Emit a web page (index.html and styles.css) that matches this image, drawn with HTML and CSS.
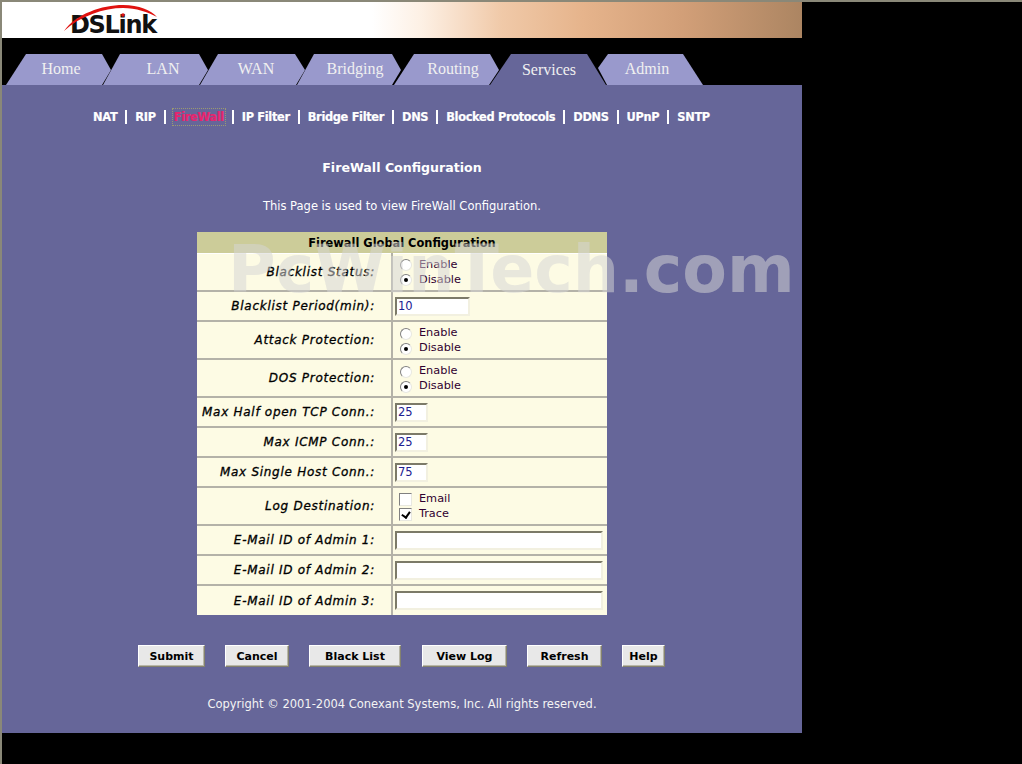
FILE: index.html
```html
<!DOCTYPE html>
<html lang="en">
<head>
<meta charset="utf-8">
<title>FireWall Configuration</title>
<link rel="stylesheet" href="styles.css">
</head>
<body>
<div class="page">
  <header class="banner">
    <div class="logo">
      <span class="logo-text">DSLink</span>
      <svg class="logo-arc" width="100" height="30" viewBox="0 0 100 30" aria-hidden="true"><path d="M0 27 C12 10 38 1 59 1 C75 1 87 6 93 13 C84 8 72 4 59 4 C40 4 16 12 0 27 Z" fill="#e0120f"/><circle cx="59" cy="11" r="1.8" fill="#e0120f"/></svg>
    </div>
  </header>
  <nav class="tabs">
    <a class="tab tab-home">Home</a>
    <a class="tab tab-lan">LAN</a>
    <a class="tab tab-wan">WAN</a>
    <a class="tab tab-bridging">Bridging</a>
    <a class="tab tab-routing">Routing</a>
    <a class="tab tab-services">Services</a>
    <a class="tab tab-admin">Admin</a>
  </nav>
  <main class="content">
    <ul class="subnav">
      <li>NAT</li><li class="bar"></li>
      <li>RIP</li><li class="bar"></li>
      <li class="current">FireWall</li><li class="bar"></li>
      <li>IP Filter</li><li class="bar"></li>
      <li>Bridge Filter</li><li class="bar"></li>
      <li>DNS</li><li class="bar"></li>
      <li>Blocked Protocols</li><li class="bar"></li>
      <li>DDNS</li><li class="bar"></li>
      <li>UPnP</li><li class="bar"></li>
      <li>SNTP</li>
    </ul>
    <h1 class="title">FireWall Configuration</h1>
    <p class="intro">This Page is used to view FireWall Configuration.</p>
    <table class="config">
      <colgroup><col class="col-name"><col class="col-val"></colgroup>
      <thead>
        <tr><th colspan="2">Firewall Global Configuration</th></tr>
      </thead>
      <tbody>
        <tr class="tall"><td class="name">Blacklist Status:</td><td class="val">
          <label class="opt"><input type="radio" name="bl">Enable</label>
          <label class="opt"><input type="radio" name="bl" checked>Disable</label></td></tr>
        <tr><td class="name">Blacklist Period(min):</td><td class="val"><input class="field mid" type="text" value="10"></td></tr>
        <tr class="tall"><td class="name">Attack Protection:</td><td class="val">
          <label class="opt"><input type="radio" name="ap">Enable</label>
          <label class="opt"><input type="radio" name="ap" checked>Disable</label></td></tr>
        <tr class="tall"><td class="name">DOS Protection:</td><td class="val">
          <label class="opt"><input type="radio" name="dp">Enable</label>
          <label class="opt"><input type="radio" name="dp" checked>Disable</label></td></tr>
        <tr><td class="name">Max Half open TCP Conn.:</td><td class="val"><input class="field short" type="text" value="25"></td></tr>
        <tr><td class="name">Max ICMP Conn.:</td><td class="val"><input class="field short" type="text" value="25"></td></tr>
        <tr><td class="name">Max Single Host Conn.:</td><td class="val"><input class="field short" type="text" value="75"></td></tr>
        <tr class="tall"><td class="name">Log Destination:</td><td class="val">
          <label class="opt"><input type="checkbox">Email</label>
          <label class="opt"><input type="checkbox" checked>Trace</label></td></tr>
        <tr><td class="name">E-Mail ID of Admin 1:</td><td class="val"><input class="field long" type="text"></td></tr>
        <tr><td class="name">E-Mail ID of Admin 2:</td><td class="val"><input class="field long" type="text"></td></tr>
        <tr><td class="name">E-Mail ID of Admin 3:</td><td class="val"><input class="field long" type="text"></td></tr>
      </tbody>
    </table>
    <div class="actions">
      <button class="btn b-submit" type="button">Submit</button>
      <button class="btn b-cancel" type="button">Cancel</button>
      <button class="btn b-black" type="button">Black List</button>
      <button class="btn b-log" type="button">View Log</button>
      <button class="btn b-refresh" type="button">Refresh</button>
      <button class="btn b-help" type="button">Help</button>
    </div>
    <p class="copyright">Copyright © 2001-2004 Conexant Systems, Inc. All rights reserved.</p>
  </main>
</div>
<div class="watermark">PcWinTech.com</div>
</body>
</html>
```
FILE: styles.css
```css
* { box-sizing: border-box; }
html, body { margin: 0; padding: 0; }
body {
  position: relative;
  width: 1022px;
  height: 764px;
  overflow: hidden;
  background: #000;
  border-top: 2px solid #8a8878;
  border-left: 2px solid #8a8878;
  font-family: "DejaVu Sans", Verdana, sans-serif;
  font-size: 11px;
}
.page { width: 800px; }

.banner {
  height: 36px;
  background: linear-gradient(90deg, #fff 370px, #fdf0e4 420px, #f0c9a8 500px, #e6b48c 580px, #d29f78 680px, #ac8562 800px);
}
.logo { position: relative; width: 100px; height: 36px; margin-left: 62px; }
.logo-arc { position: absolute; left: 0; top: 2px; }
.logo-text {
  position: absolute;
  left: 6px;
  top: 8px;
  font: bold 24px/30px "DejaVu Sans", sans-serif;
  letter-spacing: -1.3px;
  color: #111;
}

.tabs {
  display: flex;
  height: 47px;
  padding: 16px 0 0 4px;
}
.tab {
  display: block;
  flex: none;
  width: 105px;
  height: 31px;
  margin-right: -8px;
  background: #9999cc;
  color: #f0f0f0;
  font: 16px/30px "Liberation Serif", serif;
  text-align: center;
}
.tab-home { padding-left: 5px; clip-path: polygon(20px 0, 96px 0, 105px 16px, 96px 31px, 0 31px); }
.tab-lan { padding-left: 15px; clip-path: polygon(17px 0, 96px 0, 105px 16px, 96px 31px, 0 31px); }
.tab-wan { padding-left: 7px; clip-path: polygon(18px 0, 95px 0, 105px 16px, 96px 31px, 0 31px); }
.tab-bridging { padding-left: 11px; clip-path: polygon(17px 0, 95px 0, 104px 16px, 95px 31px, 0 31px); }
.tab-routing { padding-left: 13px; margin-right: -9px; clip-path: polygon(20px 0, 96px 0, 105px 16px, 95px 31px, 0 31px); }
.tab-services {
  width: 117px;
  padding-left: 1px;
  margin-right: -9px;
  background: #666699;
  line-height: 32px;
  clip-path: polygon(21px 0, 97px 0, 116px 31px, 0 31px);
}
.tab-admin { margin-right: 0; padding-right: 7px; clip-path: polygon(10px 0, 85px 0, 105px 31px, 9px 31px, 0 14px); }

.content {
  height: 648px;
  padding-top: 24px;
  background: #666699;
  color: #fff;
}
.subnav {
  display: flex;
  justify-content: center;
  align-items: center;
  gap: 8px;
  height: 16px;
  margin: 0 1px 0 0;
  padding: 0;
  list-style: none;
  font: bold 11.4px/16px "DejaVu Sans", sans-serif;
  letter-spacing: -0.33px;
  -webkit-text-stroke: 0.2px;
}
.subnav .bar { width: 2px; height: 14px; background: #fff; }
.subnav .current { margin: 0 -1px; padding: 0 1px; color: #e8246e; outline: 1px dotted #9a9a70; }

.title { margin: 35px 0 0; height: 16px; font-size: 12.6px; line-height: 16px; font-weight: bold; text-align: center; }
.intro { margin: 22px 0 0; height: 16px; font-size: 11.5px; line-height: 16px; text-align: center; }

.config {
  width: 410px;
  margin: 18px auto 0;
  border-collapse: collapse;
  table-layout: fixed;
  color: #000;
  background: #fdfbe4;
}
.col-name { width: 195px; }
.col-val { width: 215px; }
.config th {
  height: 21px;
  padding: 2px 0 0;
  background: #cccc99;
  font-size: 11.4px;
  font-weight: bold;
  border-bottom: 1px solid #fff;
}
.config td { height: 30px; padding: 0; border-bottom: 2px solid #b4b2a8; }
.config tr.tall td { height: 38px; }
.config tr:last-child td { border-bottom: 0; }
.config .name {
  padding-right: 16px;
  border-right: 2px solid #b4b2a8;
  text-align: right;
  font-style: oblique;
  font-size: 12px;
  letter-spacing: 0.72px;
  -webkit-text-stroke: 0.3px #000;
  white-space: nowrap;
}
.config .val { padding-left: 2px; }
.opt { display: flex; align-items: center; height: 15px; font-size: 11.3px; color: #300030; }
.opt input {
  appearance: none;
  position: relative;
  flex: none;
  width: 12px;
  height: 12px;
  margin: 2px 7px 0 5px;
  background: #fff;
  border: 1px solid;
  border-color: #808080 #e8e8e0 #e8e8e0 #808080;
}
.opt input[type=radio] { border-radius: 50%; }
.opt input[type=radio]:checked::after {
  content: "";
  position: absolute;
  left: 3px;
  top: 3px;
  width: 4px;
  height: 4px;
  border-radius: 50%;
  background: #000;
}
.opt input[type=checkbox] { width: 13px; height: 13px; margin-left: 4px; margin-right: 7px; }
.opt input[type=checkbox]:checked::after {
  content: "";
  position: absolute;
  left: 3px;
  top: 1px;
  width: 4px;
  height: 6px;
  border: solid #000;
  border-width: 0 2px 2px 0;
  transform: rotate(35deg);
}
.field {
  display: block;
  height: 19px;
  padding: 0 1px;
  background: #fff;
  border: 2px solid;
  border-color: #7c7a68 #f2f0e0 #f2f0e0 #7c7a68;
  font: 11.5px "DejaVu Sans", sans-serif;
  color: #202090;
  outline: 0;
}
.short { width: 33px; }
.mid { width: 75px; }
.long { width: 208px; }

.actions {
  display: flex;
  justify-content: center;
  gap: 20px;
  margin: 30px 1px 0 0;
}
.btn {
  height: 22px;
  padding: 0;
  background: #e8e8e8;
  border: 1px solid;
  border-color: #fff #84826e #84826e #fff;
  box-shadow: inset -1px -1px 0 #b8b6a8;
  color: #000;
  font: bold 11px "DejaVu Sans", sans-serif;
}
.b-submit { width: 67px; }
.b-cancel { width: 64px; }
.b-black { width: 92px; }
.b-log { width: 85px; margin-left: 1px; }
.b-refresh { width: 75px; }
.b-help { width: 43px; }

.copyright { margin: 29px 0 0; height: 16px; font-size: 11.5px; line-height: 16px; text-align: center; color: #f4f4f4; }

.watermark {
  position: absolute;
  left: 226px;
  top: 230px;
  font: bold 65px/76px "DejaVu Sans", sans-serif;
  color: rgba(212, 212, 212, 0.52);
  white-space: nowrap;
  pointer-events: none;
}
```
